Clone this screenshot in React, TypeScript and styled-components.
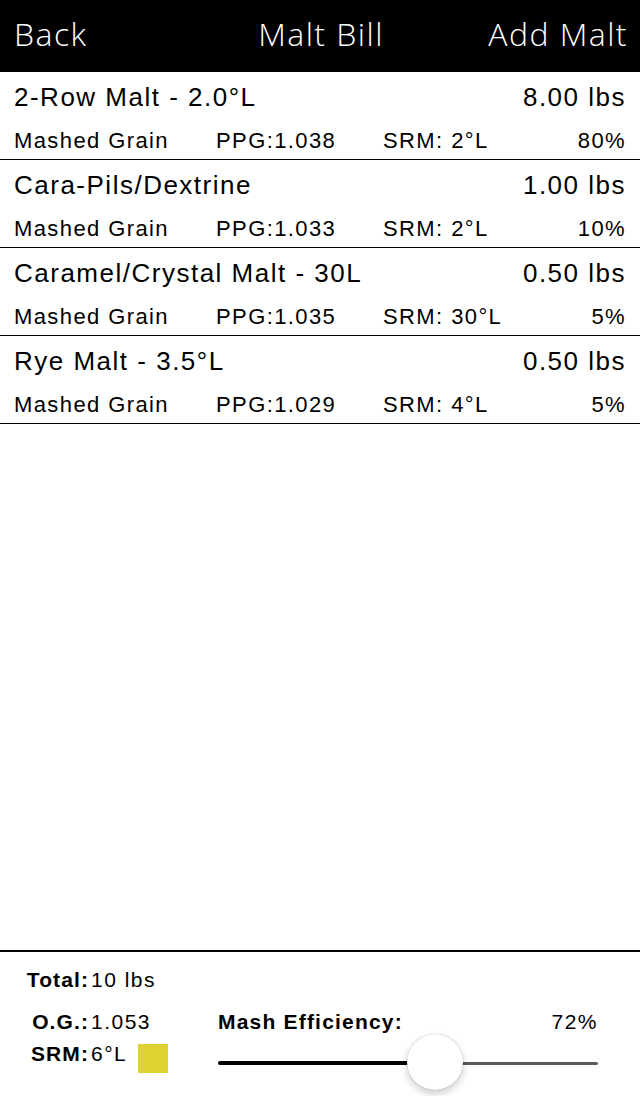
import React from "react";
import styled, { createGlobalStyle } from "styled-components";

const GlobalStyle = createGlobalStyle`
  html, body { margin: 0; padding: 0; background: #ffffff; }
  body { font-family: "Liberation Sans", Arial, sans-serif; color: #000; }
  * { box-sizing: border-box; }
`;

const Screen = styled.div`
  width: 640px;
  height: 1096px;
  display: flex;
  flex-direction: column;
  background: #fff;
  overflow: hidden;
`;

const NavBar = styled.header`
  height: 72px;
  flex: none;
  background: #000;
  color: #fff;
  display: grid;
  grid-template-columns: 1fr auto 1fr;
  align-items: start;
  padding: 0 12px 0 14px;
  font-family: "Open Sans", "Liberation Sans", sans-serif;
  font-weight: 300;
  font-size: 32px;
  line-height: 67px;
  letter-spacing: 1.45px;
`;

const NavItem = styled.span<{ $align: "left" | "center" | "right" }>`
  text-align: ${(p) => p.$align};
  white-space: nowrap;
`;

const List = styled.div`
  flex: 1;
`;

const Row = styled.div`
  height: 88px;
  border-bottom: 1px solid #000;
  padding: 0 14px 0 14px;
  display: flex;
  flex-direction: column;
`;

const TitleLine = styled.div`
  height: 50px;
  display: flex;
  justify-content: space-between;
  font-size: 26px;
  line-height: 50px;
  letter-spacing: 1.5px;
  white-space: nowrap;
`;

const DetailLine = styled.div`
  height: 37px;
  display: grid;
  grid-template-columns: 202px 167px 1fr auto;
  font-size: 22px;
  line-height: 37px;
  letter-spacing: 1.4px;
  white-space: nowrap;
`;

const Right = styled.span`
  text-align: right;
`;

const Footer = styled.footer`
  height: 146px;
  flex: none;
  border-top: 2px solid #000;
  padding-top: 13px;
  display: grid;
  grid-template-columns: 218px 380px;
  grid-template-rows: 42px 32px auto;
  font-size: 21px;
  letter-spacing: 1.5px;
`;

const Stat = styled.div`
  display: flex;
  align-items: flex-start;
  line-height: 30px;
  white-space: nowrap;
`;

const StatLabel = styled.span`
  width: 89px;
  text-align: right;
  font-weight: 700;
  letter-spacing: 1.1px;
`;

const StatValue = styled.span`
  margin-left: 2px;
`;

const Swatch = styled.span<{ $color: string }>`
  width: 30px;
  height: 29px;
  margin: 5px 0 0 11px;
  background: ${(p) => p.$color};
`;

const EffHeader = styled.div`
  display: flex;
  justify-content: space-between;
  line-height: 30px;
  white-space: nowrap;
`;

const EffLabel = styled.span`
  font-weight: 700;
  letter-spacing: 1.2px;
`;

const SliderBox = styled.div`
  position: relative;
  height: 48px;
  display: flex;
  align-items: center;
`;

const TrackFilled = styled.div`
  height: 4px;
  background: #000;
  border-radius: 2px 0 0 2px;
`;

const TrackRest = styled.div`
  flex: 1;
  height: 3px;
  background: #5a5a5a;
  border-radius: 0 2px 2px 0;
`;

const Thumb = styled.div`
  position: absolute;
  top: -5px;
  width: 56px;
  height: 56px;
  margin-left: -28px;
  border-radius: 50%;
  background: #fff;
  box-shadow: 0 0 1px rgba(0, 0, 0, 0.35), 0 4px 8px rgba(0, 0, 0, 0.2);
`;

type Malt = {
  name: string;
  weight: string;
  type: string;
  ppg: string;
  srm: string;
  pct: string;
};

const malts: Malt[] = [
  { name: "2-Row Malt - 2.0°L", weight: "8.00 lbs", type: "Mashed Grain", ppg: "1.038", srm: "2°L", pct: "80%" },
  { name: "Cara-Pils/Dextrine", weight: "1.00 lbs", type: "Mashed Grain", ppg: "1.033", srm: "2°L", pct: "10%" },
  { name: "Caramel/Crystal Malt - 30L", weight: "0.50 lbs", type: "Mashed Grain", ppg: "1.035", srm: "30°L", pct: "5%" },
  { name: "Rye Malt - 3.5°L", weight: "0.50 lbs", type: "Mashed Grain", ppg: "1.029", srm: "4°L", pct: "5%" },
];

const thumbPos = 217; // px from the track start

export default function App() {
  return (
    <>
      <GlobalStyle />
      <Screen>
        <NavBar>
          <NavItem $align="left">Back</NavItem>
          <NavItem $align="center">Malt Bill</NavItem>
          <NavItem $align="right">Add Malt</NavItem>
        </NavBar>
        <List>
          {malts.map((m) => (
            <Row key={m.name}>
              <TitleLine>
                <span>{m.name}</span>
                <Right>{m.weight}</Right>
              </TitleLine>
              <DetailLine>
                <span>{m.type}</span>
                <span>PPG:{m.ppg}</span>
                <span>SRM: {m.srm}</span>
                <Right>{m.pct}</Right>
              </DetailLine>
            </Row>
          ))}
        </List>
        <Footer>
          <Stat>
            <StatLabel>Total:</StatLabel>
            <StatValue>10 lbs</StatValue>
          </Stat>
          <div />
          <Stat>
            <StatLabel>O.G.:</StatLabel>
            <StatValue>1.053</StatValue>
          </Stat>
          <EffHeader>
            <EffLabel>Mash Efficiency:</EffLabel>
            <span>72%</span>
          </EffHeader>
          <Stat>
            <StatLabel>SRM:</StatLabel>
            <StatValue>6°L</StatValue>
            <Swatch $color="#dfd131" />
          </Stat>
          <SliderBox>
            <TrackFilled style={{ width: thumbPos }} />
            <TrackRest />
            <Thumb style={{ left: thumbPos }} />
          </SliderBox>
        </Footer>
      </Screen>
    </>
  );
}
